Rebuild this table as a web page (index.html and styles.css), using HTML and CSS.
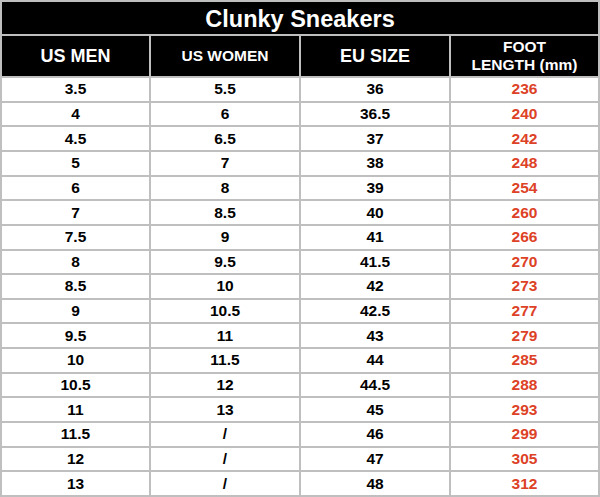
FILE: index.html
```html
<!DOCTYPE html>
<html>
<head>
<meta charset="utf-8">
<link rel="stylesheet" href="styles.css">
</head>
<body>
<div class="chart">
  <div class="title">Clunky Sneakers</div>
  <div class="head">US MEN</div>
  <div class="head small">US WOMEN</div>
  <div class="head">EU SIZE</div>
  <div class="head small">FOOT<br>LENGTH (mm)</div>

  <div class="cell">3.5</div><div class="cell">5.5</div><div class="cell">36</div><div class="cell red">236</div>
  <div class="cell">4</div><div class="cell">6</div><div class="cell">36.5</div><div class="cell red">240</div>
  <div class="cell">4.5</div><div class="cell">6.5</div><div class="cell">37</div><div class="cell red">242</div>
  <div class="cell">5</div><div class="cell">7</div><div class="cell">38</div><div class="cell red">248</div>
  <div class="cell">6</div><div class="cell">8</div><div class="cell">39</div><div class="cell red">254</div>
  <div class="cell">7</div><div class="cell">8.5</div><div class="cell">40</div><div class="cell red">260</div>
  <div class="cell">7.5</div><div class="cell">9</div><div class="cell">41</div><div class="cell red">266</div>
  <div class="cell">8</div><div class="cell">9.5</div><div class="cell">41.5</div><div class="cell red">270</div>
  <div class="cell">8.5</div><div class="cell">10</div><div class="cell">42</div><div class="cell red">273</div>
  <div class="cell">9</div><div class="cell">10.5</div><div class="cell">42.5</div><div class="cell red">277</div>
  <div class="cell">9.5</div><div class="cell">11</div><div class="cell">43</div><div class="cell red">279</div>
  <div class="cell">10</div><div class="cell">11.5</div><div class="cell">44</div><div class="cell red">285</div>
  <div class="cell">10.5</div><div class="cell">12</div><div class="cell">44.5</div><div class="cell red">288</div>
  <div class="cell">11</div><div class="cell">13</div><div class="cell">45</div><div class="cell red">293</div>
  <div class="cell">11.5</div><div class="cell">/</div><div class="cell">46</div><div class="cell red">299</div>
  <div class="cell">12</div><div class="cell">/</div><div class="cell">47</div><div class="cell red">305</div>
  <div class="cell">13</div><div class="cell">/</div><div class="cell">48</div><div class="cell red">312</div>
</div>
</body>
</html>
```

FILE: styles.css
```css
html, body {
  margin: 0;
  padding: 0;
  background: #ffffff;
}

.chart {
  box-sizing: border-box;
  width: 600px;
  height: 497px;
  display: grid;
  grid-template-columns: 147px 148px 148px 147px;
  grid-template-rows: 32px 40px repeat(17, 1fr);
  gap: 2px;
  padding: 2px;
  background: #bfbfbf;
  font-family: "Liberation Sans", Arial, sans-serif;
  font-weight: bold;
}

.title {
  grid-column: 1 / -1;
  background: #000000;
  color: #ffffff;
  font-size: 23.5px;
  display: flex;
  align-items: center;
  justify-content: center;
  padding-top: 2px;
  box-sizing: border-box;
}

.head {
  background: #000000;
  color: #ffffff;
  font-size: 18px;
  display: flex;
  align-items: center;
  justify-content: center;
  text-align: center;
}

.head.small {
  font-size: 15.5px;
  line-height: 18.5px;
}

.cell {
  background: #ffffff;
  color: #000000;
  font-size: 15.5px;
  display: flex;
  align-items: center;
  justify-content: center;
}

.cell.red {
  color: #dd4126;
}
```
